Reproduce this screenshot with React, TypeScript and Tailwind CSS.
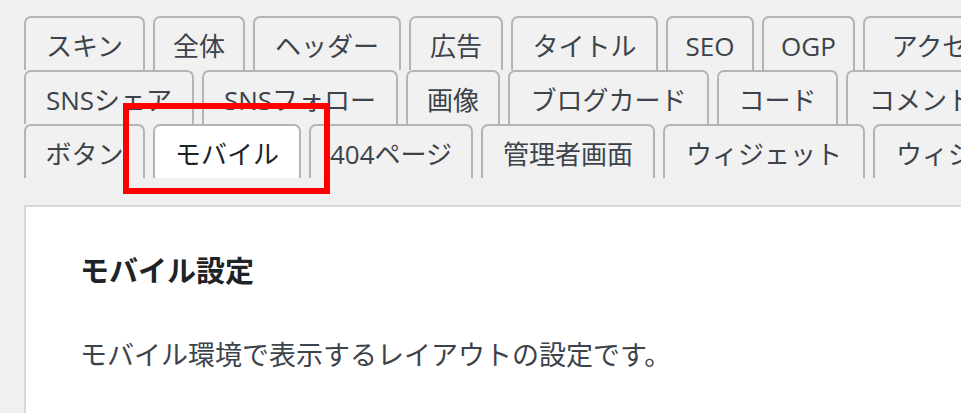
import React from "react";

type Tab = { label: string; w: string; active?: boolean };

const rows: Tab[][] = [
  [
    { label: "スキン", w: "w-[121px]" },
    { label: "全体", w: "w-[92px]" },
    { label: "ヘッダー", w: "w-[148px]" },
    { label: "広告", w: "w-[94px]" },
    { label: "タイトル", w: "w-[147px]" },
    { label: "SEO", w: "w-[88px]" },
    { label: "OGP", w: "w-[93px]" },
    { label: "アクセス解析・認証", w: "w-[290px]" },
  ],
  [
    { label: "SNSシェア", w: "w-[170px]" },
    { label: "SNSフォロー", w: "w-[196px]" },
    { label: "画像", w: "w-[94px]" },
    { label: "ブログカード", w: "w-[201px]" },
    { label: "コード", w: "w-[121px]" },
    { label: "コメント", w: "w-[150px]" },
  ],
  [
    { label: "ボタン", w: "w-[121px]" },
    { label: "モバイル", w: "w-[148px]", active: true },
    { label: "404ページ", w: "w-[164px]" },
    { label: "管理者画面", w: "w-[174px]" },
    { label: "ウィジェット", w: "w-[202px]" },
    { label: "ウィジェットエリア", w: "w-[280px]" },
  ],
];

function TabItem({ tab }: { tab: Tab }) {
  return (
    <div
      className={`${tab.w} shrink-0 h-[54px] flex items-center justify-center pt-[4px] border-2 border-b-0 border-[#b4b4b4] rounded-t-[7px] whitespace-nowrap text-[26px] ${
        tab.active ? "bg-white text-[#1d2327]" : "bg-[#f1f1f1] text-[#3c434a]"
      }`}
    >
      {tab.label}
    </div>
  );
}

export default function App() {
  return (
    <div
      className="relative h-[413px] w-[961px] overflow-hidden bg-[#f0f0f0]"
      style={{ fontFamily: '"Open Sans", "Noto Sans CJK JP", sans-serif' }}
    >
      <div className="pt-[16px] pl-[24px]">
        {rows.map((row, i) => (
          <div key={i} className="flex gap-[8px]">
            {row.map((t) => (
              <TabItem key={t.label} tab={t} />
            ))}
          </div>
        ))}
      </div>

      <div className="ml-[24px] mt-[27px] h-[300px] border-2 border-r-0 border-b-0 border-[#d8d8d8] bg-white pl-[54px] pt-[44px]">
        <h2 className="text-[29px] font-bold text-[#1d2327] leading-[40px]">モバイル設定</h2>
        <p className="mt-[46px] text-[27px] text-[#3c434a] leading-[36px]">
          モバイル環境で表示するレイアウトの設定です。
        </p>
      </div>

      {/* highlight box */}
      <div className="absolute left-[123px] top-[103px] w-[207px] h-[91px] border-[6px] border-[#ff0000]" />
    </div>
  );
}
